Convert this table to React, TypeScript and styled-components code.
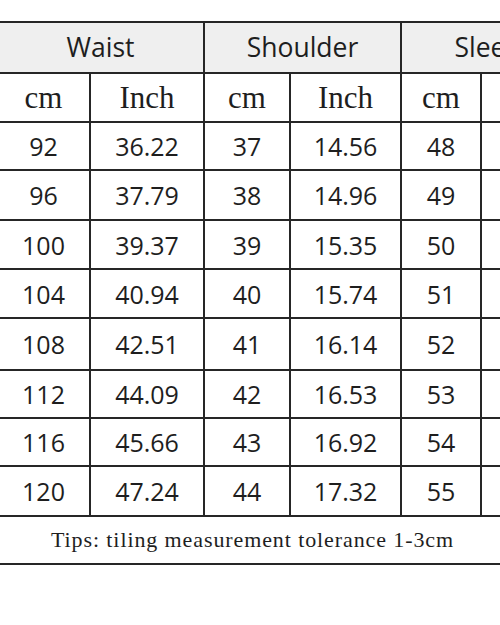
import styled, { createGlobalStyle } from "styled-components";

const GlobalStyle = createGlobalStyle`
    html, body {
        margin: 0;
        padding: 0;
        background: #ffffff;
        overflow: hidden;
    }
`;

const Page = styled.div`
    width: 500px;
    height: 625px;
    overflow: hidden;
    padding-top: 21px;
    box-sizing: border-box;
`;

const Table = styled.table`
    border-collapse: collapse;
    table-layout: fixed;
    width: 590px;
    margin-left: -4px;
    color: #1e1e1e;
`;

const Cell = styled.td`
    border: 2px solid #262626;
    text-align: center;
    padding: 0;
    font-family: "Open Sans", "DejaVu Sans", sans-serif;
    font-size: 25px;
    white-space: nowrap;
    overflow: hidden;
`;

const HeadCell = styled(Cell)`
    background: #efefef;
    font-size: 26.5px;
    padding-bottom: 2px;
`;

const UnitCell = styled(Cell)`
    font-family: "Liberation Serif", "DejaVu Serif", serif;
    font-size: 31px;
`;

const TipsCell = styled(Cell)`
    font-family: "Liberation Serif", "DejaVu Serif", serif;
    font-size: 22px;
    letter-spacing: 0.9px;
    text-align: left;
    padding-left: 53px;
`;

const Row = styled.tr<{ $h: number }>`
    height: ${(p) => p.$h}px;
`;

// sleeve inch column lies past the right edge of the crop, so it stays empty
const rows = [
    { h: 48, v: ["92", "36.22", "37", "14.56", "48"] },
    { h: 50, v: ["96", "37.79", "38", "14.96", "49"] },
    { h: 49, v: ["100", "39.37", "39", "15.35", "50"] },
    { h: 49, v: ["104", "40.94", "40", "15.74", "51"] },
    { h: 52, v: ["108", "42.51", "41", "16.14", "52"] },
    { h: 48, v: ["112", "44.09", "42", "16.53", "53"] },
    { h: 48, v: ["116", "45.66", "43", "16.92", "54"] },
    { h: 50, v: ["120", "47.24", "44", "17.32", "55"] },
];

export default function App() {
    return (
        <Page>
            <GlobalStyle />
            <Table>
                <colgroup>
                    <col style={{ width: 93 }} />
                    <col style={{ width: 114 }} />
                    <col style={{ width: 86 }} />
                    <col style={{ width: 111 }} />
                    <col style={{ width: 80 }} />
                    <col style={{ width: 106 }} />
                </colgroup>
                <tbody>
                    <Row $h={51}>
                        <HeadCell colSpan={2}>Waist</HeadCell>
                        <HeadCell colSpan={2}>Shoulder</HeadCell>
                        <HeadCell colSpan={2}>Sleeve</HeadCell>
                    </Row>
                    <Row $h={49}>
                        <UnitCell>cm</UnitCell>
                        <UnitCell>Inch</UnitCell>
                        <UnitCell>cm</UnitCell>
                        <UnitCell>Inch</UnitCell>
                        <UnitCell>cm</UnitCell>
                        <UnitCell />
                    </Row>
                    {rows.map((r) => (
                        <Row $h={r.h} key={r.v[0]}>
                            {r.v.map((v, i) => (
                                <Cell key={i}>{v}</Cell>
                            ))}
                            <Cell />
                        </Row>
                    ))}
                    <Row $h={48}>
                        <TipsCell colSpan={6}>Tips: tiling measurement tolerance 1-3cm</TipsCell>
                    </Row>
                </tbody>
            </Table>
        </Page>
    );
}
